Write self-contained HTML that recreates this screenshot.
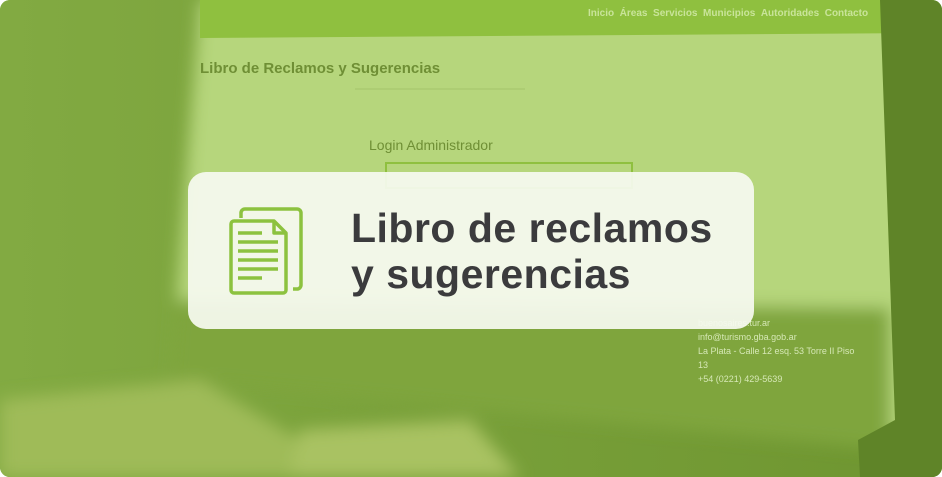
<!DOCTYPE html>
<html><head><meta charset="utf-8"><style>
html,body{margin:0;padding:0;width:942px;height:477px;overflow:hidden;background:#fff}
.wrap{position:absolute;left:0;top:0;width:942px;height:477px;border-radius:10px;overflow:hidden;background:#7ea63e}
svg.bg{position:absolute;left:0;top:0}
.card{position:absolute;left:188px;top:172px;width:566px;height:157px;border-radius:18px;background:rgba(246,250,240,0.93)}
.t{position:absolute;left:351px;top:205px;font-family:"Liberation Sans",sans-serif;font-weight:bold;font-size:41px;line-height:46px;color:#3b3b3d;letter-spacing:0.5px}
.s{position:absolute;font-family:"Liberation Sans",sans-serif;color:#6f8f35;font-size:13px}
</style></head><body><div class="wrap">
<svg class="bg" width="942" height="477" viewBox="0 0 942 477">
<defs><linearGradient id="l" x1="0" x2="1"><stop offset="0" stop-color="#82aa42"/><stop offset="1" stop-color="#6e9530"/></linearGradient>
<filter id="b"><feGaussianBlur stdDeviation="8"/></filter></defs>
<rect width="942" height="477" fill="url(#l)"/>
<g filter="url(#b)">
<polygon points="200,0 935,0 935,440 170,380" fill="#b6d67c"/>
<polygon points="176,300 890,308 890,450 170,380" fill="#7fa53c"/>
<polygon points="0,400 200,380 300,440 340,477 0,477" fill="#9fbb58"/>
<polygon points="300,430 470,420 520,477 290,477" fill="#a9c262"/>
</g>
<polygon points="200,0 935,0 935,33 200,38" fill="#8fc03f"/>
<polygon points="880,0 942,0 942,477 860,477 858,440 895,420" fill="#5f8428"/>
<line x1="355" y1="89" x2="525" y2="89" stroke="#a4c46a" stroke-width="1"/>
<rect x="386" y="163" width="246" height="25" fill="none" stroke="#8fc03f" stroke-width="2"/>
</svg>
<div class="s" style="left:200px;top:60px;font-size:15px;font-weight:bold">Libro de Reclamos y Sugerencias</div>
<div class="s" style="left:369px;top:137px;font-size:14px">Login Administrador</div>
<div class="s" style="left:588px;top:8px;font-size:10px;font-weight:bold;color:#c9e49a">Inicio &nbsp;Áreas &nbsp;Servicios &nbsp;Municipios &nbsp;Autoridades &nbsp;Contacto</div>
<div class="s" style="left:698px;top:316px;font-size:9px;color:#d6e8b6;line-height:14px">buenosaires.tur.ar<br>info@turismo.gba.gob.ar<br>La Plata - Calle 12 esq. 53 Torre II Piso<br>13<br>+54 (0221) 429-5639</div>
<div class="card"></div>
<svg style="position:absolute;left:226px;top:205px" width="80" height="92" viewBox="0 0 80 92">
<g fill="none" stroke="#8cc23f" stroke-width="3.5" stroke-linejoin="round">
<path d="M15 13 V8 a4 4 0 0 1 4-4 H71 a4 4 0 0 1 4 4 V80 a4 4 0 0 1-4 4 H67"/>
<path d="M8 16 H48 L60 28 V85 a3 3 0 0 1-3 3 H8 a3 3 0 0 1-3-3 V19 a3 3 0 0 1 3-3 Z"/>
<path d="M48 16 V28 H60"/>
</g>
<g stroke="#8cc23f" stroke-width="3.5">
<line x1="12" y1="28" x2="36" y2="28"/><line x1="12" y1="37" x2="52" y2="37"/><line x1="12" y1="46" x2="52" y2="46"/><line x1="12" y1="55" x2="52" y2="55"/><line x1="12" y1="64" x2="52" y2="64"/><line x1="12" y1="73" x2="36" y2="73"/>
</g></svg>
<div class="t">Libro de reclamos<br>y sugerencias</div>
</div></body></html>
